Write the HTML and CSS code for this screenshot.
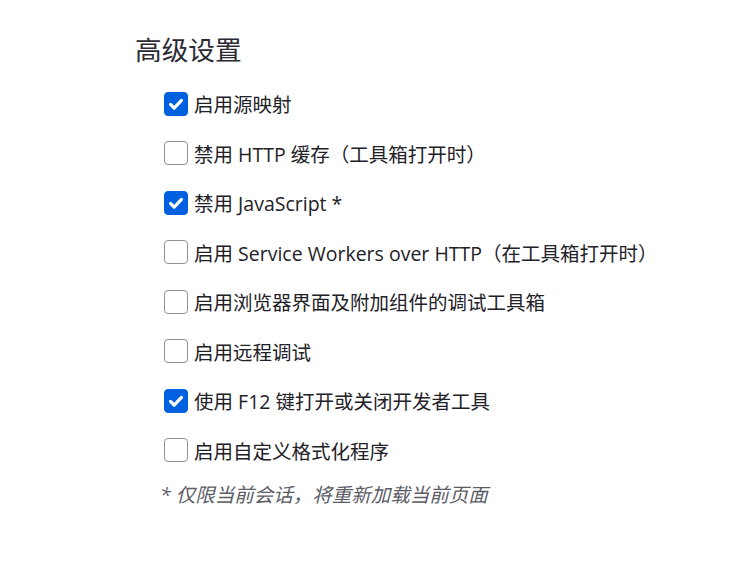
FILE: index.html
```html
<!DOCTYPE html>
<html>
<head>
  <meta charset="utf-8">
  <title>高级设置</title>
  <link rel="stylesheet" href="styles.css">
</head>
<body>
  <div class="settings">
    <h2>高级设置</h2>
    <ul class="options">
      <li>
        <label><span class="box checked"><svg viewBox="0 0 24 24"><path d="M6 12.5l4 4l8-8.5"/></svg></span>启用源映射</label>
      </li>
      <li>
        <label><span class="box"></span>禁用 HTTP 缓存（工具箱打开时）</label>
      </li>
      <li>
        <label><span class="box checked"><svg viewBox="0 0 24 24"><path d="M6 12.5l4 4l8-8.5"/></svg></span>禁用 JavaScript *</label>
      </li>
      <li>
        <label><span class="box"></span>启用 Service Workers over HTTP（在工具箱打开时）</label>
      </li>
      <li>
        <label><span class="box"></span>启用浏览器界面及附加组件的调试工具箱</label>
      </li>
      <li>
        <label><span class="box"></span>启用远程调试</label>
      </li>
      <li>
        <label><span class="box checked"><svg viewBox="0 0 24 24"><path d="M6 12.5l4 4l8-8.5"/></svg></span>使用 F12 键打开或关闭开发者工具</label>
      </li>
      <li>
        <label><span class="box"></span>启用自定义格式化程序</label>
      </li>
    </ul>
    <p class="note">* 仅限当前会话，将重新加载当前页面</p>
  </div>
</body>
</html>
```

FILE: styles.css
```css
body {
  margin: 0;
  background: #fff;
  font-family: "Open Sans", "Noto Sans CJK SC", sans-serif;
  color: #222127;
}
.settings {
  padding: 32px 0 0 135px;
}
.settings h2 {
  margin: 0;
  font-size: 26.7px;
  font-weight: normal;
  line-height: 36px;
  color: #2b2a33;
}
.options {
  list-style: none;
  margin: 11px 0 0;
  padding: 0 0 0 29px;
}
.options li {
  height: 49.5px;
  display: flex;
  align-items: center;
}
.options label {
  display: flex;
  align-items: center;
  gap: 6px;
  font-size: 19.5px;
}
.box {
  width: 24px;
  height: 24px;
  box-sizing: border-box;
  border: 1px solid #8f8f9d;
  border-radius: 4px;
  background: #fff;
  display: flex;
}
.box.checked {
  border-color: #0061e0;
  background: #0061e0;
}
.box svg {
  width: 22px;
  height: 22px;
  fill: none;
  stroke: #fff;
  stroke-width: 3.5;
  stroke-linecap: round;
  stroke-linejoin: round;
}
.note {
  margin: 6px 0 0 25px;
  font-size: 19.5px;
  font-style: italic;
  color: #5b5b66;
  line-height: 27px;
}
```
